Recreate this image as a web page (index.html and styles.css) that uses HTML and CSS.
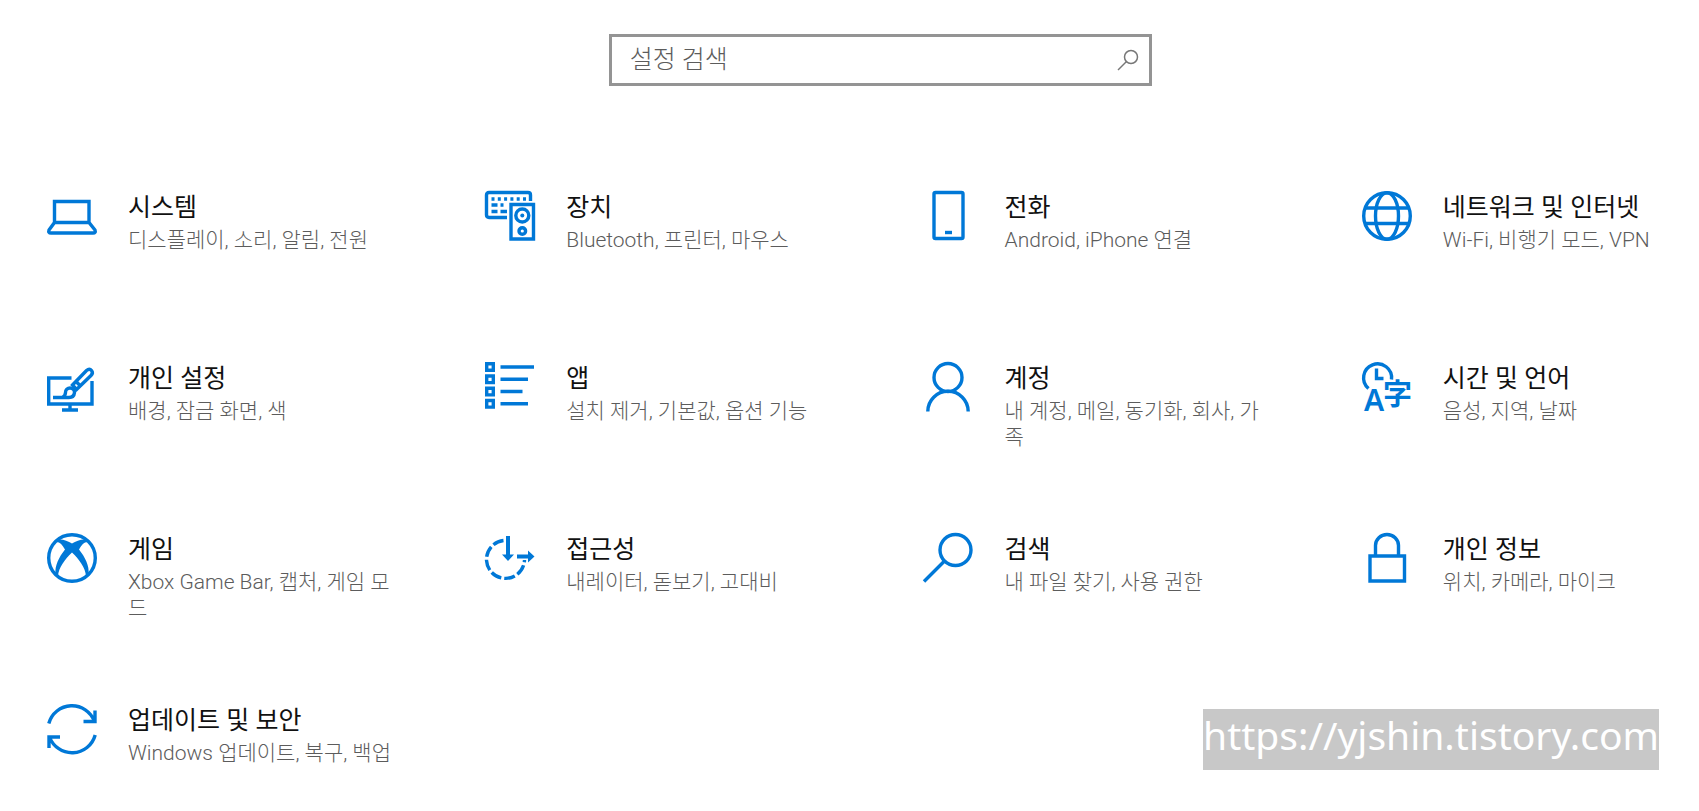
FILE: index.html
```
<!DOCTYPE html>
<html lang="ko">
<head>
    <meta charset="UTF-8">
    <meta name="viewport" content="width=device-width, initial-scale=1.0">
    <title>설정</title>
    <link rel="stylesheet" href="styles.css">
</head>
<body>
    <form class="search">
        <input type="text" id="search" placeholder="설정 검색" aria-label="설정 검색">
        <button type="button" aria-label="검색">
            <svg viewBox="0 0 22 22"><circle cx="14" cy="8" r="6.5"/><path d="M9.5 12.5L1 21"/></svg>
        </button>
    </form>

    <main class="settings">
        <a class="item" href="#">
            <svg class="icon" viewBox="0 0 50 50"><path d="M7.5 32V10.5h34.5V32M7.5 31.5h34.5l6 7.5q1 3-2 3H4q-3 0-2-3z"/></svg>
            <div class="text">
                <h2>시스템</h2>
                <p>디스플레이, 소리, 알림, 전원</p>
            </div>
        </a>
        <a class="item" href="#">
            <svg class="icon" viewBox="0 0 50 50">
                <path d="M22 26.5H4q-2.5 0-2.5-2.5V4q0-2.5 2.5-2.5h39q2.5 0 2.5 2.5v6"/>
                <path d="M6.5 8h35" stroke-dasharray="3 3.3"/>
                <path d="M6.5 14h6M15.5 14h3M6.5 20.5h6M15.5 20.5h6.5"/>
                <path d="M26 13.5h22.5V48H26z"/>
                <circle cx="37.3" cy="24.5" r="6.5"/>
                <circle cx="37.3" cy="40" r="3.3"/>
                <circle class="fill" cx="37.3" cy="24.5" r="2"/>
            </svg>
            <div class="text">
                <h2>장치</h2>
                <p>Bluetooth, 프린터, 마우스</p>
            </div>
        </a>
        <a class="item" href="#">
            <svg class="icon" viewBox="0 0 50 50"><rect x="10" y="1.5" width="29" height="46" rx="1.5"/><path d="M21 41.5h7"/></svg>
            <div class="text">
                <h2>전화</h2>
                <p>Android, iPhone 연결</p>
            </div>
        </a>
        <a class="item" href="#">
            <svg class="icon" viewBox="0 0 50 50"><circle cx="25" cy="25" r="23.3"/><ellipse cx="25" cy="25" rx="11.5" ry="23.3"/><path d="M3 17h44M3 32.5h44"/></svg>
            <div class="text">
                <h2>네트워크 및 인터넷</h2>
                <p>Wi-Fi, 비행기 모드, VPN</p>
            </div>
        </a>
        <a class="item" href="#">
            <svg class="icon" viewBox="0 0 50 50">
                <path d="M24.5 16H1.7v26h43.3V19M23 42v6M15 48h16"/>
                <path d="M25.5 23L39.5 8.5q3-2.5 5 0t-.5 5L29.5 27.5zM29 19.5l4 4"/>
                <path d="M6 35.5h16q5 0 5.5-5a4.5 4.5 0 0 0-9 0q0 3-3 5"/>
            </svg>
            <div class="text">
                <h2>개인 설정</h2>
                <p>배경, 잠금 화면, 색</p>
            </div>
        </a>
        <a class="item" href="#">
            <svg class="icon" viewBox="0 0 50 50">
                <path d="M1.7 1.7h6.6v6.6H1.7zM1.7 14h6.6v6.6H1.7zM1.7 26.3h6.6v6.6H1.7zM1.7 38.5h6.6v6.6H1.7z"/>
                <path d="M15.5 5H49M15.5 17.3H43M15.5 29.5h22M15.5 41.8H43"/>
            </svg>
            <div class="text">
                <h2>앱</h2>
                <p>설치 제거, 기본값, 옵션 기능</p>
            </div>
        </a>
        <a class="item" href="#">
            <svg class="icon" viewBox="0 0 50 50"><circle cx="24" cy="15.5" r="14"/><path d="M3.8 49.5a20.2 20.2 0 0 1 40.4 0"/></svg>
            <div class="text">
                <h2>계정</h2>
                <p>내 계정, 메일, 동기화, 회사, 가족</p>
            </div>
        </a>
        <a class="item" href="#">
            <svg class="icon" viewBox="0 0 50 50">
                <path d="M6.5 26.5A14 14 0 1 1 29.5 17.5M14.5 6.5v10h7"/>
                <text class="latin" x="12" y="49">A</text>
                <text class="hanja" x="35.5" y="43">字</text>
            </svg>
            <div class="text">
                <h2>시간 및 언어</h2>
                <p>음성, 지역, 날짜</p>
            </div>
        </a>
        <a class="item" href="#">
            <svg class="icon" viewBox="0 0 50 50">
                <circle cx="25" cy="25" r="23.3"/>
                <path class="fill" d="M9 7.5C13 5 20 7.500 25 10.5 30 7.5 37 5 41 7.5L40.5 9C37 9 34.5 12 32 16.5 38 24 42.5 33 41.5 41L39 43C38.5 35 32 26 25 19.5 18 26 11.5 35 11 43L8.5 41C7.5 33 12 24 18 16.5 15.5 12 13 9 9.5 9z"/>
            </svg>
            <div class="text">
                <h2>게임</h2>
                <p>Xbox Game Bar, 캡처, 게임 모드</p>
            </div>
        </a>
        <a class="item" href="#">
            <svg class="icon" viewBox="0 0 50 50">
                <path d="M18.5 7.5A19 19 0 1 0 39.5 27" stroke-dasharray="11 3"/>
                <path d="M23 3v20M32 23.5h13" stroke-width="4"/>
                <path class="fill" d="M17 21.5h12l-6 6.5zM43 17.5v12l6.500-6z"/>
            </svg>
            <div class="text">
                <h2>접근성</h2>
                <p>내레이터, 돋보기, 고대비</p>
            </div>
        </a>
        <a class="item" href="#">
            <svg class="icon" viewBox="0 0 50 50"><circle cx="31.5" cy="17" r="15.5"/><path d="M20.5 28L0 48.500"/></svg>
            <div class="text">
                <h2>검색</h2>
                <p>내 파일 찾기, 사용 권한</p>
            </div>
        </a>
        <a class="item" href="#">
            <svg class="icon" viewBox="0 0 50 50"><path d="M8 23h34.5v25H8zM13.5 23V12.5a11.5 11 0 0 1 23 0V23"/></svg>
            <div class="text">
                <h2>개인 정보</h2>
                <p>위치, 카메라, 마이크</p>
            </div>
        </a>
        <a class="item" href="#">
            <svg class="icon" viewBox="0 0 50 50"><path d="M1.8 19.5A24 24 0 0 1 47.5 17.5M48 6.5V17.5H36.5M48.2 31A24 24 0 0 1 2.5 33M2 44V33H13"/></svg>
            <div class="text">
                <h2>업데이트 및 보안</h2>
                <p>Windows 업데이트, 복구, 백업</p>
            </div>
        </a>
    </main>

    <div class="watermark">https://yjshin.tistory.com</div>
</body>
</html>
```

FILE: styles.css
```
* {
    box-sizing: border-box;
}

body {
    position: relative;
    margin: 0;
    padding: 34px 0 0;
    min-height: 100vh;
    background-color: #fff;
    color: #111;
    font-family: Roboto, "Noto Sans CJK KR", sans-serif;
}

.search {
    display: flex;
    align-items: center;
    width: 32%;
    height: 52px;
    margin: 0 auto;
    padding: 0 10px 0 18px;
    border: 3px solid #949494;
    position: relative;
    left: 31px;
}

.search input {
    flex: 1;
    min-width: 0;
    padding: 0 0 2px;
    border: none;
    outline: none;
    background: none;
    font-family: inherit;
    font-size: 25px;
    font-weight: 300;
    color: #5c5c5c;
}

.search input::placeholder {
    color: #5c5c5c;
    opacity: 1;
}

.search button {
    width: 22px;
    height: 22px;
    padding: 0;
    border: none;
    background: none;
}

.search svg {
    display: block;
    fill: none;
    stroke: #777;
    stroke-width: 1.5;
}

.settings {
    display: grid;
    grid-template-columns: repeat(3, 13fr) 10fr;
    grid-auto-rows: 86px;
    row-gap: 85px;
    margin: 105px 0 0 47px;
}

.item {
    display: flex;
    align-items: flex-start;
    color: inherit;
    text-decoration: none;
}

.icon {
    flex: none;
    width: 50px;
    height: 50px;
    margin-right: 31px;
    overflow: visible;
    fill: none;
    stroke: #0078d7;
    stroke-width: 3.4;
}

.icon .fill {
    fill: #0078d7;
    stroke: none;
}

.icon text {
    fill: #0078d7;
    stroke: none;
    text-anchor: middle;
}

.icon .latin {
    font-family: "Noto Sans", sans-serif;
    font-size: 30px;
    font-weight: 600;
}

.icon .hanja {
    font-size: 29px;
    font-weight: 700;
}

.text {
    max-width: 272px;
}

.text h2 {
    margin: 0;
    font-size: 25px;
    font-weight: 400;
    line-height: 34px;
}

.text p {
    margin: 2px 0 0;
    font-size: 21px;
    font-weight: 300;
    line-height: 26px;
    color: #5c5c5c;
}

.watermark {
    position: absolute;
    right: 40px;
    bottom: 41px;
    padding-bottom: 9px;
    background-color: #c8c8c8;
    color: #fff;
    font-family: "Noto Sans", sans-serif;
    font-size: 39px;
    line-height: 52px;
}
```
